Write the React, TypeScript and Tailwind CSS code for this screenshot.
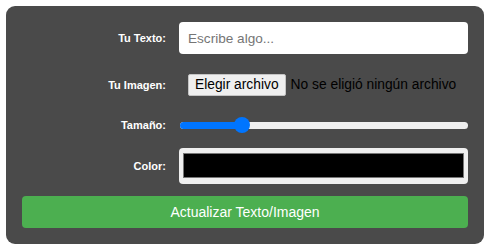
import React from "react";

const labelCls =
  "w-[144px] shrink-0 text-right text-[11px] font-bold text-white leading-none";

export default function App() {
  const size = 20; // porcentaje del deslizador

  return (
    <div
      className="min-h-[250px] w-[495px] bg-white pt-[6px] pl-[6px]"
      style={{ fontFamily: '"Liberation Sans", Arial, sans-serif' }}
    >
      <div className="flex w-[478px] flex-col rounded-[9px] bg-[#4a4a4a] px-4 pt-4 pb-4">
        {/* Texto */}
        <div className="flex h-[32px] items-center gap-[13px]">
          <label className={labelCls}>Tu Texto:</label>
          <input
            type="text"
            placeholder="Escribe algo..."
            className="h-[32px] flex-1 rounded-[4px] bg-white px-[9px] text-[13.6px] text-black placeholder:text-[#757575] outline-none"
          />
        </div>

        {/* Imagen */}
        <div className="mt-[20px] flex h-[22px] items-center gap-[13px]">
          <label className={labelCls}>Tu Imagen:</label>
          <div className="flex flex-1 items-center pl-[9px] text-[13.8px] text-black">
            <span className="flex h-[22px] items-center rounded-[2px] border border-[#c4c4c4] bg-[#efefef] px-[6px]">
              Elegir archivo
            </span>
            <span className="ml-[5px]">No se eligió ningún archivo</span>
          </div>
        </div>

        {/* Tamaño */}
        <div className="mt-[20px] flex h-[18px] items-center gap-[13px]">
          <label className={labelCls}>Tamaño:</label>
          <div className="relative flex h-[16px] flex-1 items-center pl-[1px]">
            <div className="flex h-[7px] w-full overflow-hidden rounded-full bg-[#efefef]">
              <div className="h-full bg-[#0075ff]" style={{ width: `${size + 3}%` }} />
            </div>
            <div
              className="absolute top-[0px] h-[16px] w-[16px] -translate-x-1/2 rounded-full bg-[#0075ff]"
              style={{ left: `calc(8px + ${size}% * 0.944)` }}
            />
          </div>
        </div>

        {/* Color */}
        <div className="mt-[14px] flex h-[36px] items-center gap-[13px]">
          <label className={labelCls}>Color:</label>
          <div className="flex h-[36px] flex-1 rounded-[4px] bg-[#efefef] px-[4px] pt-[5px] pb-[6px]">
            <div className="flex-1 border border-[#777777] bg-black" />
          </div>
        </div>

        <button className="mt-[12px] h-[32px] w-full rounded-[4px] bg-[#4caf50] text-[14px] text-white">
          Actualizar Texto/Imagen
        </button>
      </div>
    </div>
  );
}
